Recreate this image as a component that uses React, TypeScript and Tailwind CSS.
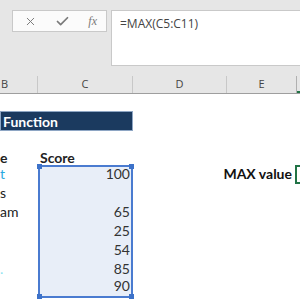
import { X, Check } from 'lucide-react';

const rows = [
  { left: 't', leftColor: 'text-[#29a8e0]', score: '100' },
  { left: 's', leftColor: 'text-[#222]', score: '' },
  { left: 'am', leftColor: 'text-[#222]', score: '65' },
  { left: '', leftColor: '', score: '25' },
  { left: '', leftColor: '', score: '54' },
  { left: '.', leftColor: 'text-[#8fe3f0]', score: '85' },
  { left: '', leftColor: '', score: '90' },
];

function Handle({ pos }: { pos: string }) {
  return <div className={`absolute w-[5px] h-[5px] bg-[#3d72c9] ${pos}`} />;
}

export default function App() {
  return (
    <div className="w-[300px] h-[300px] overflow-hidden bg-white" style={{ fontFamily: 'Lato, "Liberation Sans", sans-serif' }}>
      {/* formula bar */}
      <div className="h-[76px] bg-[#e6e6e6] pt-[10px] pl-[12px] flex gap-[4px]">
        <div className="w-[95px] h-[22px] bg-[#fbfbfb] border border-[#c9c9c9] flex items-center justify-between pl-[11px] pr-[9px] text-[#7a7a7a]">
          <X size={13} strokeWidth={1.8} />
          <Check size={15} strokeWidth={2.8} />
          <span className="italic text-[12px] leading-none" style={{ fontFamily: '"Liberation Serif", serif' }}>fx</span>
        </div>
        <div className="flex-1 h-[56px] bg-white border border-r-0 border-[#c9c9c9] pl-[8px] pt-[4px] text-[12px] text-[#444]" style={{ fontFamily: '"Open Sans", sans-serif' }}>
          =MAX(C5:C11)
        </div>
      </div>

      {/* column headers */}
      <div className="h-[18px] bg-[#e6e6e6] border-b border-[#9e9e9e] flex text-[11px] text-[#444]" style={{ fontFamily: '"Open Sans", sans-serif' }}>
        <div className="w-[66px] ml-[-28px] shrink-0 border-r border-[#c8c8c8] flex items-center justify-center">B</div>
        <div className="w-[95px] shrink-0 border-r border-[#c8c8c8] flex items-center justify-center">C</div>
        <div className="w-[94px] shrink-0 border-r border-[#c8c8c8] flex items-center justify-center">D</div>
        <div className="w-[70px] shrink-0 border-r border-[#b0b0b0] flex items-center justify-center">E</div>
        <div className="flex-1 border-b-2 border-[#217346]" />
      </div>

      {/* sheet body */}
      <div className="text-[14px] text-[#222]">
        <div className="h-[17px]" />
        <div className="h-[20px] flex">
          <div className="w-[133px] bg-[#1b3a5f] border border-[#8ea6c4] text-white font-bold flex items-center pl-[2px]">Function</div>
        </div>
        <div className="h-[17px]" />
        <div className="h-[17px] flex items-end font-bold">
          <div className="w-[38px] leading-none">e</div>
          <div className="pl-[2px] leading-none">Score</div>
        </div>

        {rows.map((r, i) => {
          const first = i === 0;
          const last = i === rows.length - 1;
          return (
            <div key={i} className="h-[19px] shrink-0 flex">
              <div className={`w-[38px] shrink-0 flex items-end leading-none pb-[3px] ${r.leftColor}`}>{r.left}</div>
              <div
                className={`w-[95px] shrink-0 relative bg-[#e8eef8] border-x-2 border-[#4a7bd0] flex items-end justify-end leading-none pb-[3px] pr-[1px] text-[#333] ${first ? 'border-t-2' : ''} ${last ? 'border-b-2' : ''}`}
              >
                {r.score}
                {first && <Handle pos="-left-[3px] -top-[3px]" />}
                {first && <Handle pos="-right-[3px] -top-[3px]" />}
                {last && <Handle pos="-left-[3px] -bottom-[3px]" />}
                {last && <Handle pos="-right-[3px] -bottom-[3px]" />}
              </div>
              {first && (
                <div className="flex-1 flex items-end">
                  <div className="w-[162px] text-right font-bold leading-none pb-[3px] pr-[3px] text-[#111]">MAX value</div>
                  <div className="flex-1 h-full border-2 border-r-0 border-[#217346]" />
                </div>
              )}
            </div>
          );
        })}
      </div>
    </div>
  );
}
